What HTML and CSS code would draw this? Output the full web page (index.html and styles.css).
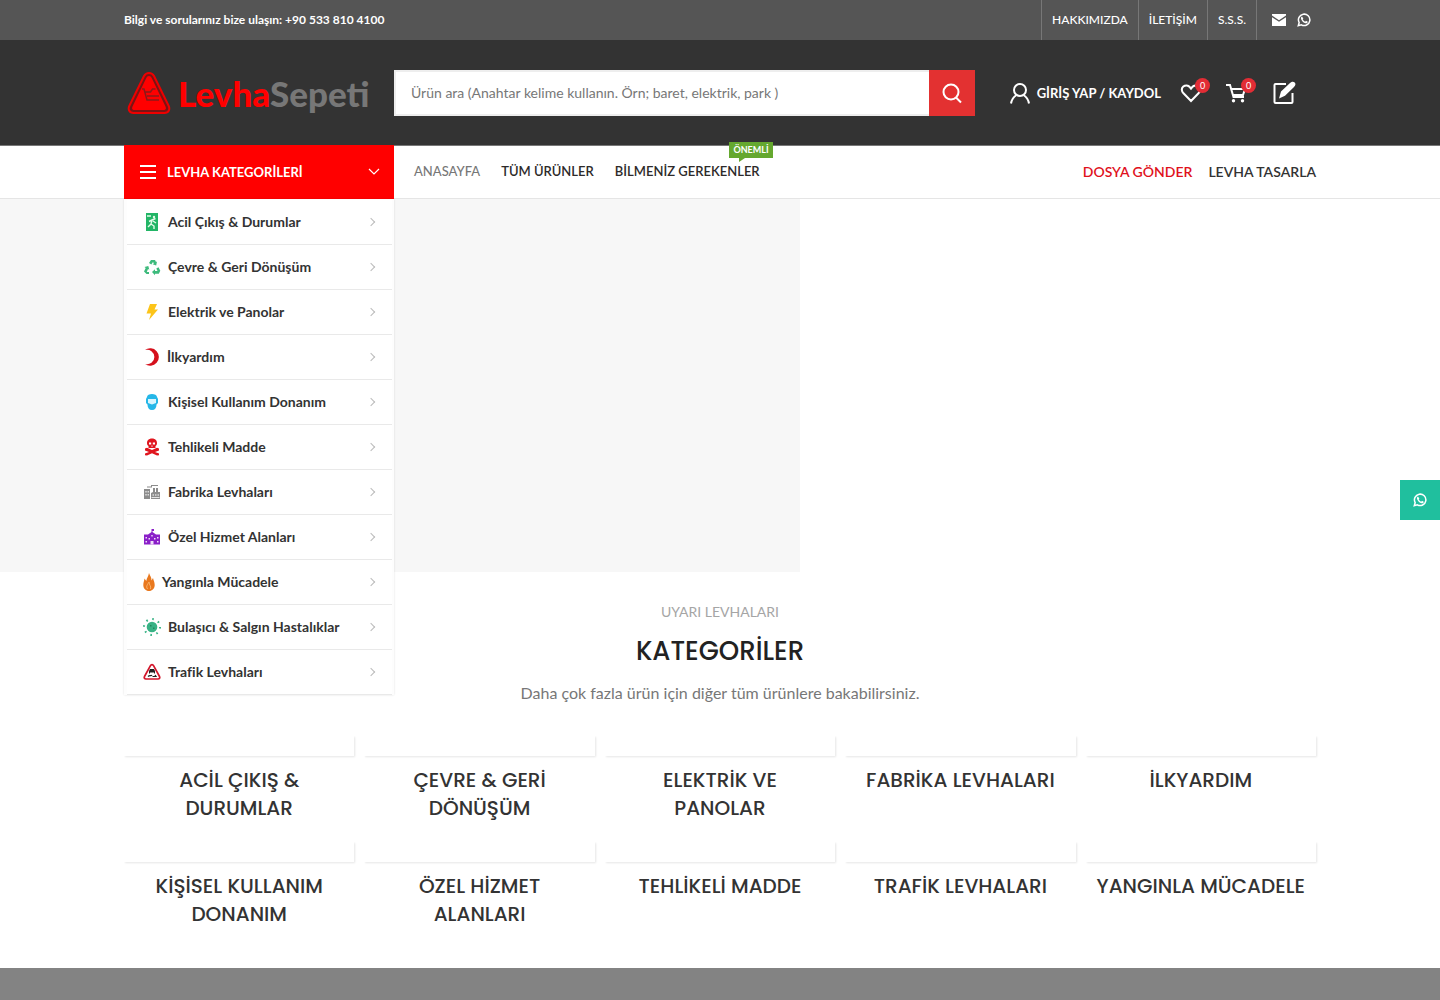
FILE: index.html
```html
<!DOCTYPE html>
<html lang="tr">
<head>
<meta charset="utf-8">
<meta name="viewport" content="width=device-width, initial-scale=1">
<title>LevhaSepeti</title>
<link rel="stylesheet" href="styles.css">
</head>
<body>
<div class="topbar">
  <div class="container topbar-row">
    <p class="topbar-note">Bilgi ve sorularınız bize ulaşın: +90 533 810 4100</p>
    <nav class="topbar-links">
      <a href="#">HAKKIMIZDA</a>
      <a href="#">İLETİŞİM</a>
      <a href="#">S.S.S.</a>
      <span class="social">
        <a href="#" aria-label="E-posta"><svg width="16" height="14" viewBox="0 0 16 14"><path fill="#fff" d="M1 1h14v1.600L8 7.200 1 2.600zM1 4.200l7 4.600 7-4.600V13H1z"/></svg></a>
        <a href="#" aria-label="WhatsApp"><svg width="14" height="14" viewBox="0 0 24 24"><use href="#whatsapp"/></svg></a>
      </span>
    </nav>
  </div>
</div>

<header class="header">
  <div class="container header-row">
    <a class="logo" href="#" aria-label="LevhaSepeti">
      <svg width="44" height="44" viewBox="0 0 44 44">
        <path d="M22 2c-2.500 0-4 1.200-5 3L2.500 34.500c-2 4 0 7.500 4 7.500h31c4 0 6-3.500 4-7.500L27 5c-1-1.800-2.500-3-5-3z" fill="#7a1414" stroke="#e00" stroke-width="2"/>
        <path d="M22 5c-1.500 0-2 .8-2.700 2L5.500 35.500c-1 2-.2 3.500 1.500 3.500h30c1.700 0 2.500-1.500 1.500-3.500L24.700 7C24 5.800 23.500 5 22 5z" fill="#f00"/>
        <path d="M15 18h2l3 11h12M18.500 21h5l2-3h3M20 25h12" fill="none" stroke="#8a1a1a" stroke-width="1.500"/>
      </svg>
      <span class="logo-text"><b>Levha</b>Sepeti</span>
    </a>
    <form class="search">
      <input type="search" aria-label="Ürün ara" placeholder="Ürün ara (Anahtar kelime kullanın. Örn; baret, elektrik, park )">
      <button type="submit" aria-label="Ara"><svg width="22" height="22" viewBox="0 0 22 22" fill="none" stroke="#fff" stroke-width="2"><circle cx="10" cy="10" r="7.500"/><path d="M15 15.500l5 5"/></svg></button>
    </form>
    <div class="tools">
      <a class="account" href="#"><svg width="22" height="22" viewBox="0 0 22 22" fill="none" stroke="#fff" stroke-width="2"><circle cx="11" cy="8" r="6"/><path d="M2 21.500c.8-4.500 3-7 5.500-8.500M20 21.500c-.8-4.500-3-7-5.500-8.500"/></svg>GİRİŞ YAP / KAYDOL</a>
      <a class="tool" href="#" aria-label="Favoriler"><svg width="22" height="22" viewBox="0 0 22 22" fill="none" stroke="#fff" stroke-width="2"><path d="M11 19L3.500 11.300C1.500 9 1.500 6.300 3.300 4.600c2-1.800 5-1.500 6.500.5L11 6.700l1.200-1.600c1.500-2 4.500-2.300 6.500-.5 1.800 1.700 1.800 4.400-.2 6.700z"/></svg><span class="count">0</span></a>
      <a class="tool" href="#" aria-label="Sepet"><svg width="22" height="22" viewBox="0 0 22 22" fill="none" stroke="#fff" stroke-width="2"><path d="M0 3h4l3.500 12H18M5 7h14l-2 6H7"/><circle cx="7.500" cy="18.800" r="1.700" fill="#fff" stroke="none"/><circle cx="16.500" cy="18.800" r="1.700" fill="#fff" stroke="none"/></svg><span class="count">0</span></a>
      <a class="tool" href="#" aria-label="Levha tasarla"><svg width="24" height="24" viewBox="0 0 24 24"><path fill="none" stroke="#fff" stroke-width="2" d="M14 3H3.500a1 1 0 0 0-1 1v17a1 1 0 0 0 1 1h16a1 1 0 0 0 1-1V12"/><path fill="#fff" d="M7 17.500l2-7 9-8.500c2-1.800 3.500-1.600 4.700-.5 1.200 1.200 1 2.900-.7 4.500l-9 8.700z"/></svg></a>
    </div>
  </div>
</header>

<div class="navbar">
  <div class="container navbar-row">
    <div class="categories">
      <button class="categories-toggle" type="button"><svg width="16" height="14" viewBox="0 0 16 14" stroke="#fff" stroke-width="2"><path d="M0 1h16M0 7h16M0 13h16"/></svg><span>LEVHA KATEGORİLERİ</span><svg width="12" height="8" viewBox="0 0 12 8" fill="none" stroke="#fff" stroke-width="1.200"><path d="M1 1l5 5 5-5"/></svg></button>
      <ul class="menu">
        <li><a href="#"><svg width="18" height="18" viewBox="0 0 18 18"><path fill="#22b566" d="M3 0h12v18H3z"/><path fill="none" stroke="#e4fbe9" stroke-width="1.400" d="M4 3h4M12.500 5.500L9 7l-3 1.500M9 7l-1 4 3 2v3M8 11l-3 3M10 8l3 2"/><circle cx="11" cy="4" r="1.200" fill="#e4fbe9"/></svg>Acil Çıkış &amp; Durumlar</a></li>
        <li><a href="#"><svg width="18" height="18" viewBox="0 0 18 18" fill="#3dba7c"><path d="M6 5l2-3h4l1 2 1-.6-.8 4-3.600-1.200 1.300-.8L10 4 8.300 6.500zM1.500 9l3.800-.9 1 3.600-1.300-.7-1.200 3H6V16H3.500L1 13.500l1.700-3.600zM9 14l3-2.700V13h2.500l-1.200-2.600 2.200-1.200 1.800 3.600-1.500 2.900H12v1.500z"/></svg>Çevre &amp; Geri Dönüşüm</a></li>
        <li><a href="#"><svg width="18" height="18" viewBox="0 0 18 18"><path fill="#fcc419" d="M7 1h7l-2.500 5.500H15L6 17l2-6.500H3.500z"/></svg>Elektrik ve Panolar</a></li>
        <li><a href="#"><svg width="17" height="18" viewBox="0 0 17 18"><path fill="#d5101c" d="M2 2A8.700 8.700 0 1 1 2 16 7.300 7.300 0 1 0 2 2z"/></svg>İlkyardım</a></li>
        <li><a href="#"><svg width="18" height="18" viewBox="0 0 18 18"><path fill="#25b7e8" d="M4 4c0-4 10-4 10 0l1 2v4l-1.500 1.500C13.500 15 12 17 9 17s-4.500-2-4.500-5.500L3 10V6z"/><path fill="#d9f6ff" d="M5 6h8v4l-4 1.500L5 10z"/></svg>Kişisel Kullanım Donanım</a></li>
        <li><a href="#"><svg width="18" height="18" viewBox="0 0 18 18" fill="#e0161f"><path d="M9 .5c3.500 0 5 2.200 5 4.500 0 1.500-.6 2.500-1.500 3v2h-7V8C4.600 7.500 4 6.500 4 5c0-2.300 1.500-4.500 5-4.500z"/><path d="M2 10.500l2-.8L9 12l5-2.300 2 .8v2L12 14l4 1.500v1.800l-2 .2-5-2.200-5 2.200-2-.2v-1.800L6 14l-4-1.500z"/><path fill="#fff" d="M6 4.500h2.200v2H6zM9.800 4.500H12v2H9.800zM8.500 7.500h1v1.200h-1z"/></svg>Tehlikeli Madde</a></li>
        <li><a href="#"><svg width="18" height="18" viewBox="0 0 18 18" fill="#8c8c8c"><path d="M1 6h6v10H1zM8 10l2-1V5h2v4l1 0V5h2v4h2v7H8zM4 3.500h4V2h7v1H9v1.500H4z"/><path fill="#fff" d="M2.500 8h1v1.500h-1zM4.700 8h1v1.500h-1zM2.500 11h1v1.500h-1zM4.700 11h1v1.500h-1zM9.500 11.500h1.500v1H9.500zM12 11.500h1.500v1H12zM14.500 11.500H16v1h-1.500zM8.500 14h8v.7h-8z"/></svg>Fabrika Levhaları</a></li>
        <li><a href="#"><svg width="18" height="18" viewBox="0 0 18 18" fill="#8a1fc8"><path d="M1 6.500h4L8.500 4V1H11v2H9.500v1L13 6.500h4v10H1z"/><path fill="#efdcf9" d="M2.500 9H4v1.500H2.500zM5.500 10H7v1.500H5.500zM11 10h1.500v1.500H11zM14 9h1.500v1.500H14zM2.500 13H4v1.500H2.500zM14 13h1.500v1.500H14zM8.300 7h1.400v1.400H8.300zM7.500 13h3v3.500h-3z"/></svg>Özel Hizmet Alanları</a></li>
        <li><a href="#"><svg width="12" height="18" viewBox="0 0 12 18"><path fill="#e9781e" d="M6 0c1 3 2.500 4 2.500 7.500L10 5c.5 2.500 1.700 4 1.700 7 0 3.500-2.500 6-5.700 6S.3 15.500.3 12c0-2.500.9-4 1.200-6.500L3.300 8C3.500 5 5.500 3.500 6 0z"/><path fill="none" stroke="#f8b26a" d="M4.500 16c-2-3 .5-5 1.500-7 0 3 2.500 4 1.500 7"/></svg>Yangınla Mücadele</a></li>
        <li><a href="#"><svg width="18" height="18" viewBox="0 0 18 18"><circle cx="9" cy="9" r="5.300" fill="#38b285"/><circle cx="9" cy="9" r="8" fill="none" stroke="#38b285" stroke-width="2" stroke-dasharray="1.600 4.683"/><path fill="#22855f" d="M7 7h1.500v1.500H7zM10 9.500h1.500V11H10z"/></svg>Bulaşıcı &amp; Salgın Hastalıklar</a></li>
        <li><a href="#"><svg width="18" height="18" viewBox="0 0 18 18"><path d="M9 1.700c.9 0 1.300.4 1.700 1.100l5.800 10.700c.7 1.400 0 2.500-1.500 2.500H3c-1.500 0-2.200-1.100-1.500-2.500L7.300 2.800C7.700 2.100 8.100 1.700 9 1.700z" fill="#fff" stroke="#d3162b" stroke-width="1.700"/><path fill="#222" d="M6 8l1-2h4l1 2v2.500h-1v-1H7v1H6z"/><path fill="none" stroke="#222" stroke-width="1.200" d="M5 13.500c2-2 3 0 4-1.500M9.500 13.500h3.500l-1-1.500"/></svg>Trafik Levhaları</a></li>
      </ul>
    </div>
    <nav class="main-links">
      <a class="current" href="#">ANASAYFA</a>
      <a href="#">TÜM ÜRÜNLER</a>
      <a href="#">BİLMENİZ GEREKENLER<span class="label">ÖNEMLİ</span></a>
    </nav>
    <nav class="side-links">
      <a class="accent" href="#">DOSYA GÖNDER</a>
      <a href="#">LEVHA TASARLA</a>
    </nav>
  </div>
</div>

<main>
  <section class="hero"><div class="hero-slide"></div></section>
  <section class="container catalog">
    <p class="eyebrow">UYARI LEVHALARI</p>
    <h2>KATEGORİLER</h2>
    <p class="lead">Daha çok fazla ürün için diğer tüm ürünlere bakabilirsiniz.</p>
    <div class="grid">
      <a class="card" href="#"><span class="thumb"></span><h3>ACİL ÇIKIŞ &amp; DURUMLAR</h3></a>
      <a class="card" href="#"><span class="thumb"></span><h3>ÇEVRE &amp; GERİ DÖNÜŞÜM</h3></a>
      <a class="card" href="#"><span class="thumb"></span><h3>ELEKTRİK VE PANOLAR</h3></a>
      <a class="card" href="#"><span class="thumb"></span><h3>FABRİKA LEVHALARI</h3></a>
      <a class="card" href="#"><span class="thumb"></span><h3>İLKYARDIM</h3></a>
      <a class="card" href="#"><span class="thumb"></span><h3>KİŞİSEL KULLANIM DONANIM</h3></a>
      <a class="card" href="#"><span class="thumb"></span><h3>ÖZEL HİZMET ALANLARI</h3></a>
      <a class="card" href="#"><span class="thumb"></span><h3>TEHLİKELİ MADDE</h3></a>
      <a class="card" href="#"><span class="thumb"></span><h3>TRAFİK LEVHALARI</h3></a>
      <a class="card" href="#"><span class="thumb"></span><h3>YANGINLA MÜCADELE</h3></a>
    </div>
  </section>
</main>
<footer class="footer"></footer>

<a class="chat" href="#" aria-label="WhatsApp"><svg width="14" height="14" viewBox="0 0 24 24"><use href="#whatsapp"/></svg></a>

<svg class="defs" width="0" height="0" aria-hidden="true"><symbol id="whatsapp" viewBox="0 0 24 24"><path fill="none" stroke="#fff" stroke-width="2.600" d="M2.200 21.800l1.500-5.300A9.800 9.800 0 1 1 7.500 20.300z"/><path fill="#fff" d="M8.500 6.200c-1.800.8-2.200 2.800-1.200 4.800 1.500 3.200 4 5.500 7.200 6.500 2 .5 3.800-.8 3.900-2.700l-3-1.500-1.400 1.500c-2-.8-3.400-2.200-4.200-4.100l1.100-1.400z"/></symbol></svg>
</body>
</html>
```
FILE: styles.css
```css
* { box-sizing: border-box; }
body {
  margin: 0;
  background: #fff;
  color: #333;
  font: 14px/20px Lato, "Liberation Sans", sans-serif;
}
a { color: inherit; text-decoration: none; }
p, h2, h3, ul { margin: 0; padding: 0; }
svg { display: block; flex: none; }
.defs { position: absolute; }
.container { max-width: 1222px; margin: 0 auto; padding: 0 15px; }

.topbar { background: #555; color: #fff; font-size: 12px; }
.topbar-row { display: flex; justify-content: space-between; min-height: 40px; }
.topbar-note { align-self: center; font-weight: 700; }
.topbar-links { display: flex; font-weight: 500; }
.topbar-links > * {
  display: flex;
  align-items: center;
  padding: 0 10px;
  border-left: 1px solid #777;
}
.topbar-links .social { gap: 10px; padding: 0 5px 0 14px; }

.header { background: #333; color: #fff; }
.header-row { display: flex; align-items: center; min-height: 105px; }
.logo { display: flex; align-items: center; gap: 7px; width: 270px; padding-left: 3px; }
.logo-text { color: #777; font: 900 35px/44px Lato, sans-serif; }
.logo-text b { color: #f00; font-weight: 900; }
.search { display: flex; flex: 1; height: 46px; }
.search input {
  flex: 1;
  min-width: 0;
  padding: 0 15px;
  border: 2px solid #eee;
  border-right: 0;
  background: #fff;
  font: inherit;
  appearance: none;
}
.search input::placeholder { color: #777; opacity: 1; }
.search button {
  display: grid;
  place-items: center;
  width: 46px;
  padding: 0;
  border: 0;
  background: #e33131;
}
.tools { display: flex; align-items: center; gap: 24px; padding: 0 20px 0 34px; }
.account {
  display: flex;
  align-items: center;
  gap: 6px;
  margin-right: -5px;
  font-weight: 700;
  font-size: 13px;
}
.tool { position: relative; }
.count {
  position: absolute;
  top: -4px;
  right: -8px;
  width: 15px;
  border-radius: 50%;
  background: #e22d35;
  font-size: 9px;
  line-height: 15px;
  text-align: center;
}

.navbar { border-top: 1px solid #777; border-bottom: 1px solid #e5e5e5; }
.navbar-row { display: flex; min-height: 52px; }
.categories { position: relative; z-index: 2; display: flex; width: 270px; margin: -1px 0; }
.categories-toggle {
  display: flex;
  align-items: center;
  gap: 11px;
  width: 100%;
  padding: 0 14px 0 16px;
  border: 0;
  background: #f00;
  color: #fff;
  font: 700 13px/20px Lato, sans-serif;
}
.categories-toggle span { flex: 1; text-align: left; }
.menu {
  position: absolute;
  top: 100%;
  left: 0;
  width: 100%;
  padding: 1px 2px 0 3px;
  background: #fdfdfd;
  box-shadow: 0 0 2px rgba(0, 0, 0, 0.12);
  list-style: none;
}
.menu li { border-bottom: 1px solid #e9e9e9; background: #fff; }
.menu a {
  display: flex;
  align-items: center;
  gap: 7px;
  height: 44px;
  padding: 0 18px 0 16px;
  font-weight: 700;
}
.menu a::after {
  width: 5px;
  height: 5px;
  margin-left: auto;
  border: solid #bbb;
  border-width: 1px 1px 0 0;
  transform: rotate(45deg);
  content: "";
}
.main-links, .side-links { display: flex; align-items: center; }
.main-links {
  gap: 21px;
  padding: 0 0 2px 20px;
  color: #2d2a2a;
  font-size: 13px;
  font-weight: 600;
}
.main-links a { position: relative; }
.main-links .current { color: #777; font-weight: 500; }
.label {
  position: absolute;
  right: -13px;
  bottom: 23px;
  padding: 0 4px;
  background: #65a82f;
  color: #fff;
  font-size: 9px;
  font-weight: 700;
  line-height: 16px;
}
.label::before {
  position: absolute;
  top: 100%;
  left: 10px;
  border: solid transparent;
  border-width: 4px 6px 0 0;
  border-top-color: #65a82f;
  content: "";
}
.side-links { gap: 16px; margin-left: auto; font-weight: 600; }
.side-links .accent { color: #e0111c; }

.hero { display: flex; min-height: 373px; }
.hero-slide { flex: 0 0 800px; background: #f7f7f7; }

.catalog { padding-top: 30px; padding-bottom: 40px; text-align: center; }
.eyebrow { color: #a5a5a5; }
.catalog h2 {
  margin: 10px 0;
  color: #222;
  font: 500 26px/38px Poppins, Inter, sans-serif;
}
.lead { color: #777; font-size: 16px; line-height: 26px; }
.grid {
  display: grid;
  grid-template-columns: repeat(5, 1fr);
  gap: 20px 10px;
  margin-top: 30px;
}
.card { display: flex; flex-direction: column; gap: 10px; }
.thumb { height: 20px; box-shadow: 1px 1px 2px rgba(0, 0, 0, 0.1); clip-path: inset(0 -4px -4px 0); }
.card h3 { padding: 0 10px; font: 500 20px/28px Poppins, Inter, sans-serif; }
.footer { min-height: 32px; background: #838383; }

.chat {
  position: fixed;
  top: 480px;
  right: 0;
  display: grid;
  place-items: center;
  width: 40px;
  height: 40px;
  background: #20bf9e;
}
```
